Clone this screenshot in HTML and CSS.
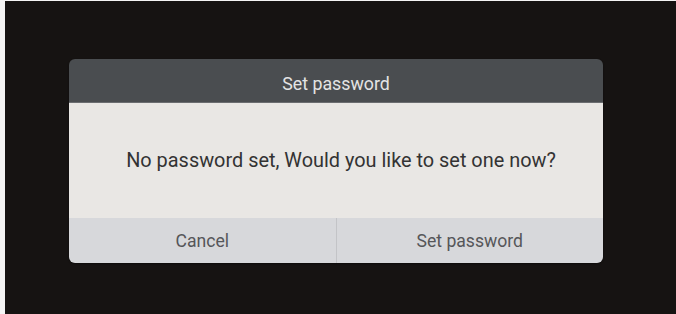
FILE: index.html
```html
<!DOCTYPE html>
<html>
<head>
<meta charset="utf-8">
<link rel="stylesheet" href="styles.css">
</head>
<body>
<div class="frame">
  <div class="screen">
    <div class="dialog">
      <div class="dialog-title">Set password</div>
      <div class="dialog-body">No password set, Would you like to set one now?</div>
      <div class="dialog-actions">
        <div class="btn">Cancel</div>
        <div class="btn btn-right">Set password</div>
      </div>
    </div>
  </div>
</div>
</body>
</html>
```
FILE: styles.css
```css
html, body {
  margin: 0;
  padding: 0;
  background: #f4f4f4;
}
body {
  width: 676px;
  height: 314px;
  overflow: hidden;
  font-family: Roboto, "Noto Sans", sans-serif;
}
.frame {
  box-sizing: border-box;
  height: 314px;
  padding: 1px 0 0 5px;
}
.screen {
  box-sizing: border-box;
  height: 313px;
  background: #161312;
  padding: 58px 0 0 64px;
}
.dialog {
  width: 534px;
  border-radius: 6px;
  overflow: hidden;
  display: flex;
  flex-direction: column;
  box-shadow: 0 1px 2px rgba(0,0,0,0.4);
}
.dialog-title {
  box-sizing: border-box;
  height: 44px;
  padding-top: 6px;
  line-height: 38px;
  background: #4a4d50;
  border-bottom: 1px solid #6b6d70;
  color: #e4e4e4;
  font-size: 17.8px;
  text-align: center;
}
.dialog-body {
  height: 115px;
  display: flex;
  align-items: center;
  justify-content: center;
  padding-left: 10px;
  background: #e9e7e4;
  color: #333333;
  font-size: 19.9px;
}
.dialog-actions {
  height: 45px;
  display: flex;
  background: #d7d8db;
}
.btn {
  flex: 1;
  display: flex;
  align-items: center;
  justify-content: center;
  color: #555659;
  font-size: 17.6px;
}
.btn-right {
  border-left: 1px solid #c3c4c7;
}
```
